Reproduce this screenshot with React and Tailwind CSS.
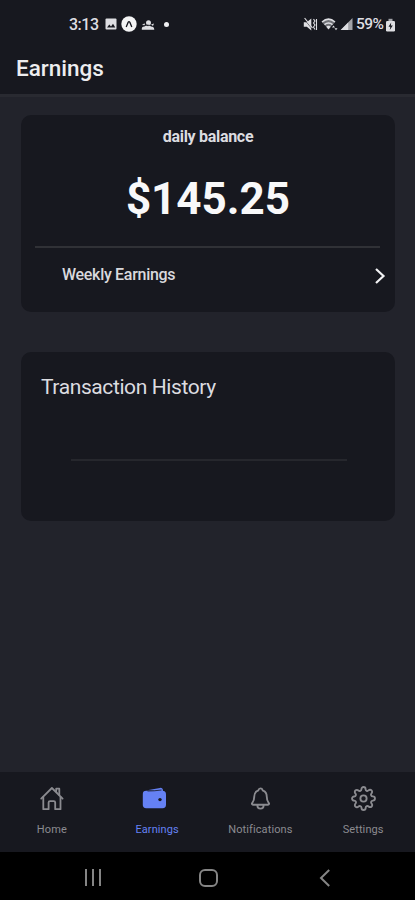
import React from 'react';
import { IoNotificationsOutline } from 'react-icons/io5';
import { FiSettings } from 'react-icons/fi';


const HomeIcon = () => (
    <svg width="25" height="25" viewBox="0 0 25 25" fill="none" stroke="currentColor" strokeWidth="1.8" strokeLinecap="round" strokeLinejoin="round">
        <path d="M2.2 12.6 12.9 2 23.6 12.6" />
        <path d="M17.2 5.2V2.7H20.3V9" />
        <path d="M4.3 11V23.2H9.6V16.6Q9.6 15.2 11 15.2H14.8Q16.2 15.2 16.2 16.6V23.2H21.5V11" />
    </svg>
);

const WalletIcon = () => (
    <svg width="25" height="25" viewBox="0 0 25 25" fill="currentColor">
        <path d="M5.2 4.2 18 1.9Q20.8 1.6 21 4.6L20.6 5.4Z" />
        <path d="M4.2 4.8H20.4Q24 4.8 24 8.4V18.8Q24 22.2 20.6 22.2H4.2Q.8 22.2 .8 18.8V8Q.8 4.8 4.2 4.8Z" />
        <path d="M5.5 5Q12 5.1 19.5 4" fill="none" stroke="#17181f" strokeWidth=".8" />
        <circle cx="18" cy="13.6" r="1.7" fill="#17181f" />
    </svg>
);

const StatusBar = () => (
    <div className="flex h-[48px] items-center pl-[69px] pr-[19px] text-[#dedee2]">
        <span className="w-[31px] whitespace-nowrap pt-[2px] text-[16px] font-medium leading-none tracking-[-0.5px]">3:13</span>
        <svg className="ml-[5px]" width="12" height="12" viewBox="0 0 12 12">
            <rect x=".5" y=".5" width="11" height="11" rx="1" fill="currentColor" />
            <path d="M2 9.5 4.3 6.5 6 8.4 8 5.8 10.3 9.5Z" fill="#17181f" />
        </svg>
        <svg className="ml-[4px]" width="16" height="16" viewBox="0 0 16 16">
            <circle cx="8" cy="8" r="7.7" fill="#f4f4f5" />
            <path d="M5.2 10.9 7.1 6.4Q8 4.8 8.9 6.4L10.8 10.9" fill="none" stroke="#17181f" strokeWidth="1.3" />
        </svg>
        <svg className="ml-[4px] mt-[2px]" width="14" height="12" viewBox="0 0 14 12" fill="currentColor">
            <circle cx="7.5" cy="3.8" r="2.5" />
            <path d="M1 6 3.5 4.3 4 6.3Z" />
            <path d="M10 5.5 13 4.4 12 7Z" />
            <path d="M.8 10.8Q.5 7.5 3.2 7.5 5 5.5 7 7.2 8.4 5.5 10 7.5 13 7.3 13.3 10.8Z" />
            <path d="M3 7Q6 4.9 10.8 6.8" fill="none" stroke="#17181f" strokeWidth=".6" />
        </svg>
        <span className="ml-[9px] h-[5px] w-[5px] rounded-full bg-[#f0f0f2]" />
        <div className="ml-auto flex items-center">
            <svg width="15" height="15" viewBox="0 0 15 15" fill="currentColor">
                <path d="M.8 5.2H3.8L8.3 1.6V13.4L3.8 9.8H.8Z" />
                <path d="M1.2 2 9.5 12.5" stroke="#17181f" strokeWidth=".6" />
                <path d="M1.6 1 9.5 11" stroke="currentColor" strokeWidth="1.2" />
                <path d="M10.5 2.2 12 4 10.5 6 12 8 10.5 10 12 12.5M13.5 2V13" fill="none" stroke="currentColor" strokeWidth="1.1" />
            </svg>
            <svg className="ml-[3px]" width="18" height="15" viewBox="0 0 18 15">
                <path d="M1 5.2Q7.5-.8 14 5.2L7.5 12.3Z" fill="currentColor" opacity=".45" />
                <path d="M1 5Q7.5-.8 14 5M3.5 7.7Q7.5 4.4 11.5 7.7" fill="none" stroke="currentColor" strokeWidth="1.5" />
                <path d="M5.3 9.7Q7.5 8 9.7 9.7L7.5 12.5Z" fill="currentColor" />
                <path d="m11 10.5 1.5-2L14 10.5ZM13.5 11.3H16.5L15 13.3Z" fill="currentColor" />
            </svg>
            <svg className="ml-[1px]" width="13" height="14" viewBox="0 0 13 14">
                <path d="M.7 13 12.5 1V13Z" fill="currentColor" opacity=".7" />
                <path d="M.7 13 8.2 5.4V13Z" fill="currentColor" />
            </svg>
            <span className="ml-[3px] w-[29px] whitespace-nowrap pt-[2px] text-[15.5px] font-medium leading-none tracking-[-0.6px]">59%</span>
            <svg className="mt-[2px]" width="11" height="14" viewBox="0 0 11 14">
                <rect x="3.5" y=".8" width="4" height="3" fill="currentColor" opacity=".7" />
                <rect x="1" y="3" width="9" height="10.5" rx="1.2" fill="currentColor" />
                <path d="M6.2 4.5 3.5 8.7H5.3L4.8 12 7.8 7.5H5.9Z" fill="#17181f" />
            </svg>
        </div>
    </div>
);

const TabBar = () => (
    <nav className="grid h-[80px] grid-cols-4 bg-[#17181f] text-[11px] leading-[14px] tracking-[0.1px] text-[#8b8b90]">
        <div className="flex flex-col items-center pt-[14px]">
            <HomeIcon />
            <span className="mt-[12px]">Home</span>
        </div>
        <div className="flex flex-col items-center pt-[14px] text-[#6581f4]">
            <div className="mr-[3px] h-[25px]"><WalletIcon /></div>
            <span className="ml-[3px] mt-[12px]">Earnings</span>
        </div>
        <div className="flex flex-col items-center pl-[2px] pt-[14px]">
            <IoNotificationsOutline size={25} className="[&_path]:[stroke-width:38px]" />
            <span className="mt-[12px]">Notifications</span>
        </div>
        <div className="flex flex-col items-center pt-[14px]">
            <FiSettings size={25} strokeWidth={1.8} />
            <span className="mt-[12px]">Settings</span>
        </div>
    </nav>
);

const SystemBar = () => (
    <div className="flex h-[48px] items-center justify-between bg-black pl-[85px] pr-[84px] pt-[3px] text-[#858585]">
        <div className="flex gap-[5px]">
            <span className="h-[17px] w-[2px] bg-current" />
            <span className="h-[17px] w-[2px] bg-current" />
            <span className="h-[17px] w-[2px] bg-current" />
        </div>
        <span className="mr-[3px] h-[18px] w-[19px] rounded-[6px] border-2 border-current" />
        <svg width="12" height="18" viewBox="0 0 12 18" fill="none" stroke="currentColor" strokeWidth="2">
            <path d="M10.2 1 2 9 10.2 17" />
        </svg>
    </div>
);

const App = () => {
    return (
        <div className="flex h-[900px] w-full flex-col bg-[#22232b] font-['Roboto',sans-serif]">
            <header className="h-[97px] border-b-[3px] border-[#292a31] bg-[#17181f]">
                <StatusBar />
                <h1 className="pl-[16px] pt-[6px] text-[22.5px] font-medium leading-[28px] text-[#ededef]">Earnings</h1>
            </header>

            <main className="flex flex-1 flex-col gap-[40px] pl-[21px] pr-[20px] pt-[18px]">
                <section className="flex h-[197px] flex-col rounded-[10px] bg-[#17181f]">
                    <p className="pt-[11px] text-center text-[16px] font-bold leading-[22px] tracking-[-0.3px] text-[#dcdce0]">daily balance</p>
                    <p className="mt-[24px] text-center text-[44px] font-bold leading-[54px] text-[#f8f8f9]">$145.25</p>
                    <div className="ml-[14px] mr-[15px] mt-[20px] h-[2px] bg-[#303136]" />
                    <div className="flex items-center justify-between pl-[41px] pr-[9px] pt-[16px]">
                        <span className="text-[16px] font-medium leading-[22px] tracking-[-0.3px] text-[#d9d9dd]">Weekly Earnings</span>
                        <svg className="mt-[2px]" width="12" height="18" viewBox="0 0 12 18" fill="none" stroke="#f1f1f3" strokeWidth="2.2">
                            <path d="M2 2 9.5 9 2 16" />
                        </svg>
                    </div>
                </section>

                <section className="h-[169px] rounded-[10px] bg-[#17181f]">
                    <h2 className="pl-[20px] pt-[22px] text-[21px] leading-[26px] tracking-[-0.4px] text-[#dcdce0]">Transaction History</h2>
                    <div className="ml-[50px] mr-[48px] mt-[59px] h-[2px] bg-[#26272d]" />
                </section>
            </main>

            <TabBar />
            <SystemBar />
        </div>
    );
}

export default App
